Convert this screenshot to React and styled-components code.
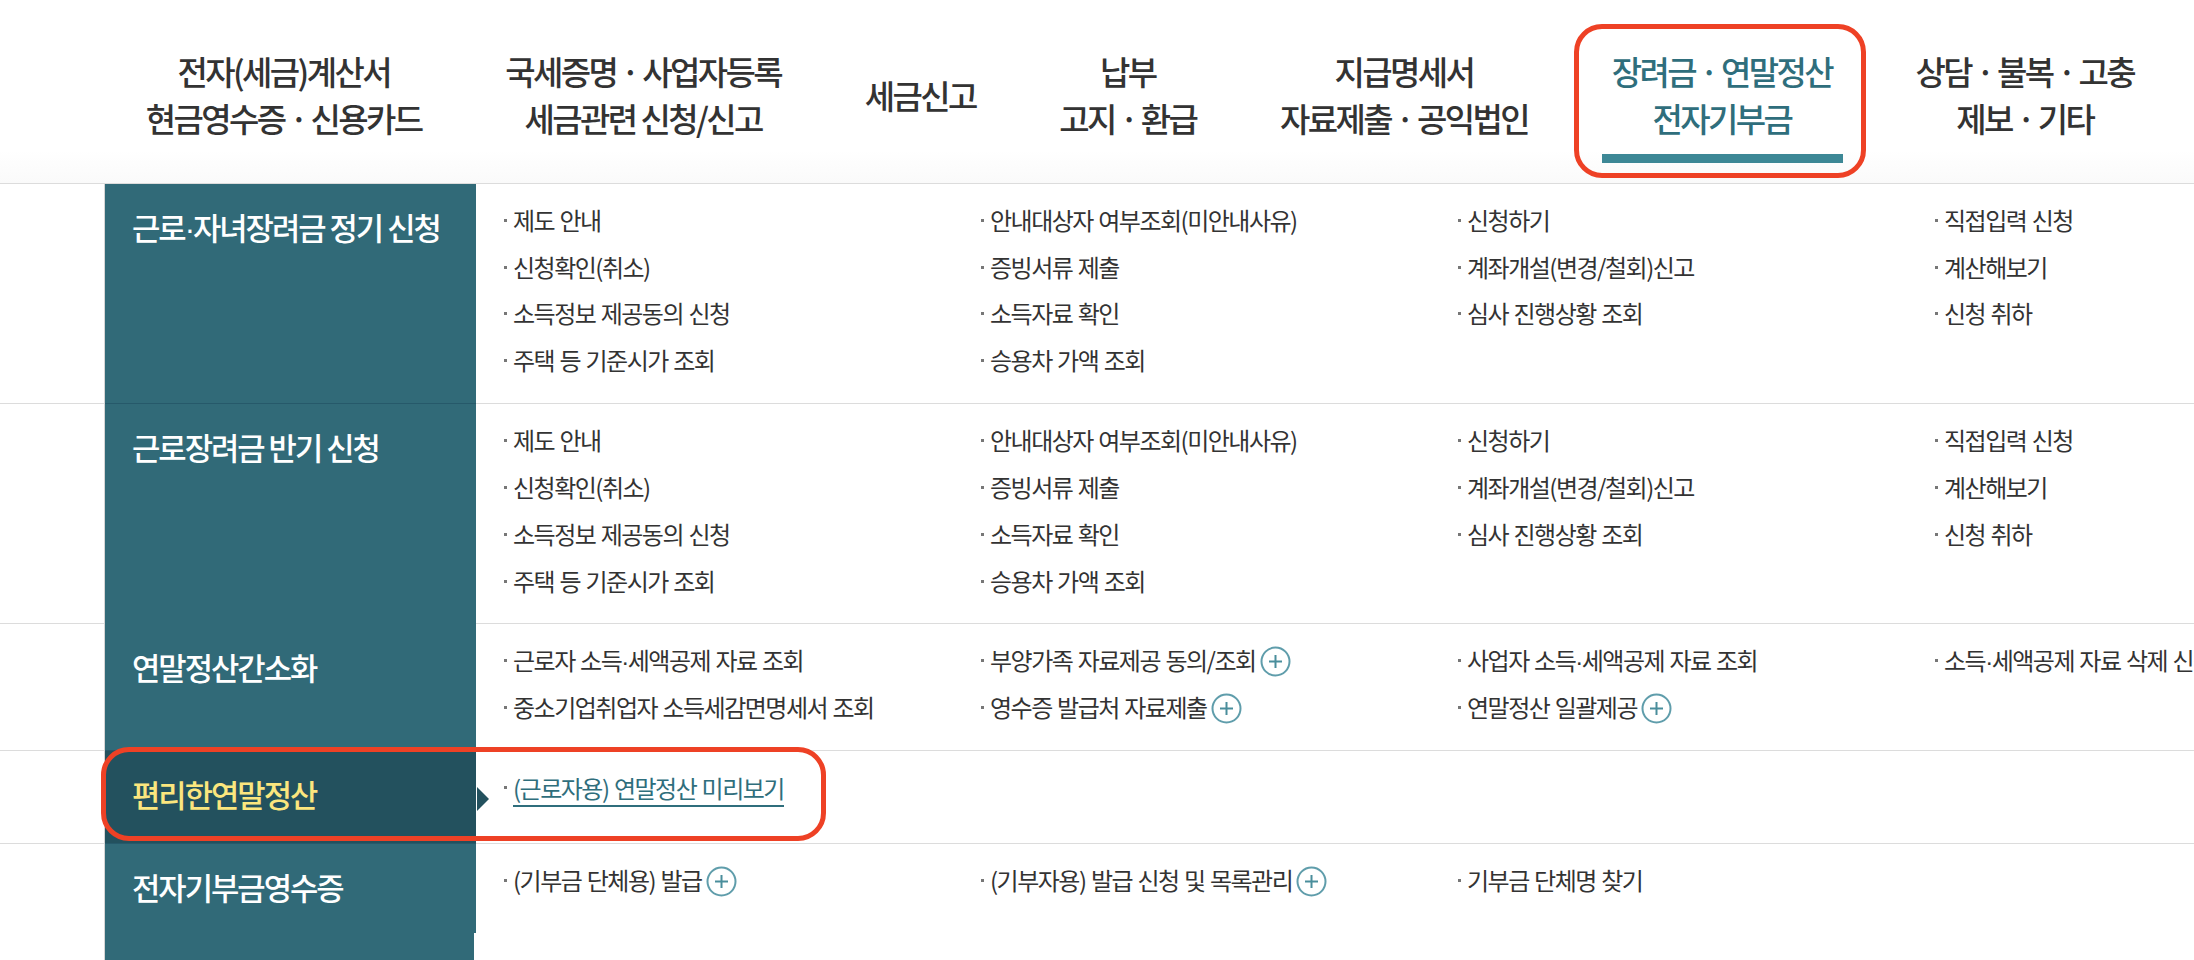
import React from 'react';
import styled, { createGlobalStyle } from 'styled-components';

const GlobalStyle = createGlobalStyle`
  html, body {
    margin: 0;
    height: 960px;
    overflow: hidden;
    background: #fff;
    font-family: "Noto Sans CJK KR", "Noto Sans", sans-serif;
  }
`;

const Page = styled.div`
  width: 2194px;
  height: 960px;
  overflow: hidden;
  position: relative;
`;

const Nav = styled.nav`
  display: flex;
  height: 183.5px;
  padding: 20px 0 0 104px;
  box-sizing: border-box;
  border-bottom: 1.5px solid #dcdcdc;
  background: linear-gradient(#fff 150px, #fafafa);
`;

const NavItem = styled.a`
  position: relative;
  display: flex;
  align-items: center;
  padding: 0 41.8px;
  height: 150px;
  text-align: center;
  white-space: pre-line;
  font-size: 33px;
  line-height: 47px;
  font-weight: 500;
  letter-spacing: -2.6px;
  color: ${p => (p.$active ? '#2f6e7c' : '#333')};
`;

const NavBar = styled.i`
  position: absolute;
  left: 32px;
  right: 31px;
  top: 134px;
  height: 9px;
  background: #3d8896;
`;

const Row = styled.section`
  display: flex;
  min-height: ${p => p.$min || 0}px;
  border-bottom: ${p => (p.$last ? 'none' : '1.5px solid #dcdcdc')};
`;

const Head = styled.h3`
  position: relative;
  flex: none;
  box-sizing: border-box;
  width: 371px;
  margin: 0 0 -1.5px 105px;
  padding: 18px 0 0 27px;
  font-size: 30.8px;
  line-height: 50px;
  font-weight: 500;
  letter-spacing: -2px;
  color: ${p => (p.$current ? '#fbe67e' : '#fff')};
  background: ${p => (p.$current ? '#23515e' : '#316a78')};
  border-bottom: ${p => (p.$last ? 'none' : '1.5px solid #26596a')};
  box-shadow: -1px 0 0 #d5d5d5;
  ${p => p.$current && `
    &::after {
      content: "";
      position: absolute;
      left: calc(100% + 1px);
      top: 36px;
      border-left: 12px solid #23515e;
      border-top: 12px solid transparent;
      border-bottom: 12px solid transparent;
    }
  `}
`;

const Items = styled.ul`
  display: grid;
  grid-template-columns: repeat(4, 477px);
  grid-auto-rows: 46.8px;
  align-content: start;
  margin: 0;
  padding: 12.5px 0 19.6px 28px;
  list-style: none;
`;

const Item = styled.li`
  display: flex;
  align-items: center;
  white-space: nowrap;
  font-size: 24px;
  letter-spacing: -1.5px;
  word-spacing: 1.5px;
  color: #333;

  &::before {
    content: "";
    flex: none;
    width: 3px;
    height: 3px;
    margin: 2px 6px 0 0;
    background: #777;
  }
`;

const CurrentLink = styled.a`
  color: #2f6e7c;
  border-bottom: 2px solid #2f6e7c;
  line-height: 34px;
  margin-top: 4px;
`;

const TightDot = styled.span`
  font-family: "Liberation Sans", sans-serif;
`;

const PlusRound = styled.svg`
  flex: none;
  width: 31px;
  height: 31px;
  margin: 3px 0 0 4px;
`;

const Callout = styled.div`
  position: absolute;
  box-sizing: border-box;
  left: ${p => p.$x}px;
  top: ${p => p.$y}px;
  width: ${p => p.$w}px;
  height: ${p => p.$h}px;
  border: 5px solid #ee4125;
  border-radius: 28px;
`;

const Notch = styled.i`
  position: absolute;
  left: 474px;
  top: 933px;
  width: 2px;
  height: 27px;
  background: #fff;
`;

const Plus = () => (
  <PlusRound viewBox="0 0 31 31">
    <circle cx="15.5" cy="15.5" r="14" fill="#fff" stroke="#5f9dab" strokeWidth="2" />
    <path d="M15.5 9v13M9 15.5h13" stroke="#4a8e9c" strokeWidth="2" fill="none" />
  </PlusRound>
);

// the middle dot between words sits tight against them
const withDots = text =>
  text.split('·').flatMap((part, i) => (i ? [<TightDot key={i}>·</TightDot>, part] : [part]));

const navItems = [
  '전자(세금)계산서\n현금영수증 · 신용카드',
  '국세증명 · 사업자등록\n세금관련 신청/신고',
  '세금신고',
  '납부\n고지 · 환급',
  '지급명세서\n자료제출 · 공익법인',
  '장려금 · 연말정산\n전자기부금',
  '상담 · 불복 · 고충\n제보 · 기타',
];

const applyItems = [
  '제도 안내', '안내대상자 여부조회(미안내사유)', '신청하기', '직접입력 신청',
  '신청확인(취소)', '증빙서류 제출', '계좌개설(변경/철회)신고', '계산해보기',
  '소득정보 제공동의 신청', '소득자료 확인', '심사 진행상황 조회', '신청 취하',
  '주택 등 기준시가 조회', '승용차 가액 조회',
];

const rows = [
  { title: '근로·자녀장려금 정기 신청', items: applyItems.map(text => ({ text })) },
  { title: '근로장려금 반기 신청', items: applyItems.map(text => ({ text })) },
  {
    title: '연말정산간소화',
    items: [
      { text: '근로자 소득·세액공제 자료 조회' },
      { text: '부양가족 자료제공 동의/조회', more: true },
      { text: '사업자 소득·세액공제 자료 조회' },
      { text: '소득·세액공제 자료 삭제 신청' },
      { text: '중소기업취업자 소득세감면명세서 조회' },
      { text: '영수증 발급처 자료제출', more: true },
      { text: '연말정산 일괄제공', more: true },
    ],
  },
  {
    title: '편리한연말정산',
    current: true,
    min: 92,
    items: [{ text: '(근로자용) 연말정산 미리보기', link: true }],
  },
  {
    title: '전자기부금영수증',
    last: true,
    min: 118,
    items: [
      { text: '(기부금 단체용) 발급', more: true },
      { text: '(기부자용) 발급 신청 및 목록관리', more: true },
      { text: '기부금 단체명 찾기' },
    ],
  },
];

export default function App() {
  return (
    <Page>
      <GlobalStyle />
      <Nav>
        {navItems.map((label, i) => (
          <NavItem key={label} $active={i === 5}>
            {label}
            {i === 5 && <NavBar />}
          </NavItem>
        ))}
      </Nav>
      {rows.map(row => (
        <Row key={row.title} $min={row.min} $last={row.last}>
          <Head $current={row.current} $last={row.last}>{withDots(row.title)}</Head>
          <Items>
            {row.items.map((item, i) => (
              <Item key={i}>
                {item.link ? <CurrentLink>{item.text}</CurrentLink> : <span>{withDots(item.text)}</span>}
                {item.more && <Plus />}
              </Item>
            ))}
          </Items>
        </Row>
      ))}
      <Notch />
      <Callout $x={1574} $y={24} $w={292} $h={154} />
      <Callout $x={101} $y={747} $w={725} $h={94} />
    </Page>
  );
}
